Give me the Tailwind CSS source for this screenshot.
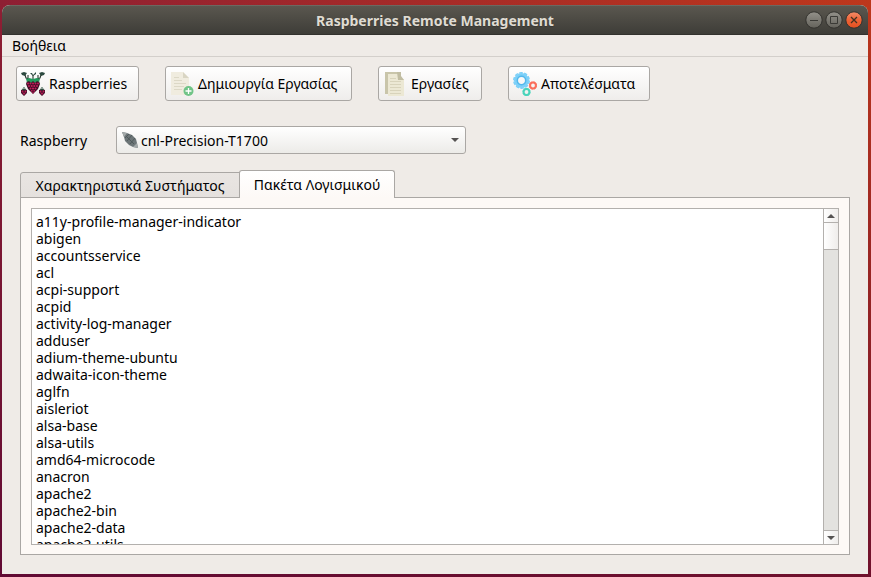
<!DOCTYPE html>
<html lang="el">
<head>
<meta charset="utf-8">
<meta name="viewport" content="width=device-width, initial-scale=1">
<title>Raspberries Remote Management</title>
<script src="https://cdn.jsdelivr.net/npm/@tailwindcss/browser@4"></script>
</head>
<body class="relative h-screen overflow-hidden bg-[linear-gradient(to_bottom,transparent,#4d0034b0),linear-gradient(to_right,#8e1f33,#bd371c)] pt-[5px] pr-[3px] pb-[3px] pl-[2px] font-['Noto_Sans','Open_Sans',sans-serif] text-[14px] leading-[17px] text-black">
<main class="flex h-full flex-col overflow-hidden rounded-t-lg bg-[#efebe7]">
  <header class="relative flex h-[30px] shrink-0 items-center justify-center border-t border-b border-t-[#6b6961] border-b-[#33322e] bg-linear-to-b from-[#5a574f] to-[#3e3d38] text-[#dfdbd2]">
    <h1 class="font-bold text-[14px] text-shadow-xs">Raspberries Remote Management</h1>
    <div class="absolute right-[5px] flex gap-[2px]">
      <button aria-label="Minimize" class="size-[18px]"><svg viewBox="0 0 18 18" class="size-[18px]"><defs><linearGradient id="g" x2="0" y2="1"><stop stop-color="#93918a"/><stop offset="1" stop-color="#64625b"/></linearGradient><linearGradient id="o" x2="0" y2="1"><stop stop-color="#f58e6a"/><stop offset=".5" stop-color="#ee6336"/><stop offset="1" stop-color="#e4501f"/></linearGradient></defs><circle cx="9" cy="9" r="8.2" fill="url(#g)" stroke="#33322e"/><path d="M5 9.5h8" stroke="#3b3a36"/></svg></button>
      <button aria-label="Maximize" class="size-[18px]"><svg viewBox="0 0 18 18" class="size-[18px]"><circle cx="9" cy="9" r="8.2" fill="url(#g)" stroke="#33322e"/><path d="M5.5 5.5h7v7h-7z" fill="none" stroke="#3b3a36"/></svg></button>
      <button aria-label="Close" class="size-[18px]"><svg viewBox="0 0 18 18" class="size-[18px]"><circle cx="9" cy="9" r="8.2" fill="url(#o)" stroke="#33322e"/><path d="M6 6l6 6M12 6l-6 6" stroke="#43301f" stroke-width="1.3"/></svg></button>
    </div>
  </header>
  <nav class="flex h-[22px] shrink-0 items-center border-b border-[#d3cfcb] px-[10px]">
    <button>Βοήθεια</button>
  </nav>

  <div class="flex shrink-0 gap-[26px] px-[14px] pt-[9px]">
    <button class="flex h-[35px] w-[123px] items-center gap-1 rounded-[3px] border border-[#aaa7a4] bg-linear-to-b from-white to-[#efedeb] pl-1 whitespace-nowrap">
      <svg viewBox="0 0 24 24" class="size-6 shrink-0">
        <path d="M0 1l3-1 3 1-2 3-3-1zM24 1l-3-1-3 1 2 3 3-1zM9 1l2 0 1 2 3-3 0 2-3 2z" fill="#2c4a40"/>
        <path d="M4 3l1 3 3 1M20 3l-1 3-3 1M12 3v4M7 3v3M17 3v3" fill="none" stroke="#27392f" stroke-width="1.100"/>
        <path d="M6 9l3-1 3 1 3-1 3 1 1 3-2 5-3 3-2 2-2-2-3-3-2-5z" fill="#3f0d25"/>
        <path d="M5 7l3-1 4 1 4-1 3 1-1 3-2-1-2 2-2-2-2 2-2-2-2 1z" fill="#24985c"/>
        <g fill="#c11c5a">
          <circle cx="7" cy="11.500" r="1"/><circle cx="9.500" cy="11.500" r="1"/><circle cx="12" cy="11.500" r="1"/><circle cx="14.500" cy="11.500" r="1"/><circle cx="17" cy="11.500" r="1"/>
          <circle cx="8" cy="14" r="1"/><circle cx="10.700" cy="14" r="1.100"/><circle cx="13.300" cy="14" r="1.100"/><circle cx="16" cy="14" r="1"/>
          <circle cx="9.500" cy="16.500" r="1"/><circle cx="12" cy="16.500" r="1.100"/><circle cx="14.500" cy="16.500" r="1"/>
          <circle cx="10.800" cy="18.800" r=".9"/><circle cx="13.200" cy="18.800" r=".9"/><circle cx="12" cy="20.700" r=".8"/>
        </g>
        <path d="M0 18l3-1 3 1v3l-3 3-3-3zM18 18l3-1 3 1v3l-3 3-3-3z" fill="#48102b"/>
        <g fill="#b91d54"><circle cx="1.500" cy="19.500" r=".9"/><circle cx="4.500" cy="19.500" r=".9"/><circle cx="3" cy="21.500" r="1"/><circle cx="19.500" cy="19.500" r=".9"/><circle cx="22.500" cy="19.500" r=".9"/><circle cx="21" cy="21.500" r="1"/></g>
        <path d="M1 17l2 1 2-1M3 15v3M19 17l2 1 2-1M21 15v3" fill="none" stroke="#294f3e"/>
      </svg>
      Raspberries
    </button>
    <button class="flex h-[35px] w-[187px] items-center gap-1 rounded-[3px] border border-[#aaa7a4] bg-linear-to-b from-white to-[#efedeb] pl-1 whitespace-nowrap">
      <svg viewBox="0 0 24 24" class="size-6 shrink-0">
        <path d="M1 0h12l6 6v17H1z" fill="#f0ecdf"/><path d="M13 0l6 6h-6z" fill="#d9d5c3"/>
        <path d="M4 5.500h5M4 8.500h8M4 11.500h12M4 14.500h10M4 17.500h8" stroke="#dcd8c6"/>
        <circle cx="18.500" cy="19" r="5" fill="#70c487"/><path d="M18.500 16v6M15.500 19h6" stroke="#fff" stroke-width="1.300"/>
      </svg>
      Δημιουργία Εργασίας
    </button>
    <button class="flex h-[35px] w-[104px] items-center gap-1 rounded-[3px] border border-[#aaa7a4] bg-linear-to-b from-white to-[#efedeb] pl-1 whitespace-nowrap">
      <svg viewBox="0 0 24 24" class="size-6 shrink-0">
        <path d="M2 0h16v22H2z" fill="#c9c5aa"/><path d="M5 2h10v5h6v17H5z" fill="#ece8d4"/><path d="M14 0h4v4l3 4h-6z" fill="#c1bda2"/>
        <path d="M7 6.500h6M7 9.500h11M7 12.500h11M7 15.500h11M7 18.500h11M7 21.500h11" stroke="#d8d3bb"/>
      </svg>
      Εργασίες
    </button>
    <button class="flex h-[35px] w-[142px] items-center gap-1 rounded-[3px] border border-[#aaa7a4] bg-linear-to-b from-white to-[#efedeb] pl-1 whitespace-nowrap">
      <svg viewBox="0 0 24 24" class="size-6 shrink-0" fill="none">
        <circle cx="8.500" cy="8.500" r="7.700" stroke="#7dd0f8" stroke-width="1.600" stroke-dasharray="3.400 1.438"/>
        <circle cx="8.500" cy="8.500" r="5.600" stroke="#7dd0f8" stroke-width="3.800"/>
        <circle cx="8.500" cy="8.500" r="4.200" stroke="#53b8ec" stroke-width="1.500"/>
        <circle cx="20" cy="13.500" r="2.900" stroke="#fa6f5d" stroke-width="2"/><circle cx="20" cy="13.500" r="3.600" stroke="#fa6f5d" stroke-dasharray="1.700 1.127"/>
        <circle cx="13.500" cy="20" r="2.900" stroke="#4bd4bb" stroke-width="2"/><circle cx="13.500" cy="20" r="3.600" stroke="#4bd4bb" stroke-dasharray="1.700 1.127"/>
      </svg>
      Αποτελέσματα
    </button>
  </div>

  <div class="mt-[25px] flex shrink-0 items-center px-[18px]">
    <label for="host" class="w-24">Raspberry</label>
    <div class="relative w-[350px]">
      <select id="host" class="block h-[28px] w-full appearance-none rounded-[3px] border border-[#aaa7a4] bg-linear-to-b from-white to-[#ecebe8] pl-6">
        <option>cnl-Precision-T1700</option>
      </select>
      <svg viewBox="0 0 16 16" class="pointer-events-none absolute top-[6px] left-[6px] size-4">
        <path d="M0 0l5 1 5 2 4 4 1 4 1 5-5-1-4-2-4-4-1-4z" fill="#6d7678"/><path d="M0 0l5 1-3 4zM16 16l-5-1 4-4z" fill="#a4aaaa"/><path d="M3 6l4-4M5 9l5-6M8 12l5-6M4 4l8 8" stroke="#505b5c"/>
      </svg>
      <svg viewBox="0 0 8 4" class="pointer-events-none absolute top-[12px] right-[7px] h-1 w-2"><path d="M0 0h8L4 4z" fill="#555352"/></svg>
    </div>
  </div>

  <section class="mx-[18px] mt-4 mb-[19px] flex min-h-0 flex-1 flex-col">
    <div role="tablist" class="relative -mb-px flex shrink-0 items-end">
      <button role="tab" aria-selected="false" class="h-[26px] w-[220px] rounded-tl-[3px] border border-[#aaa7a4] bg-linear-to-b from-[#e9e5e2] to-[#e5e1de] whitespace-nowrap">Χαρακτηριστικά Συστήματος</button>
      <button role="tab" aria-selected="true" class="-ml-px h-[28px] w-[156px] rounded-t-[3px] border border-b-0 border-[#aaa7a4] bg-linear-to-b from-white to-[#fdf9f6] whitespace-nowrap">Πακέτα Λογισμικού</button>
    </div>
    <div role="tabpanel" class="flex min-h-0 flex-1 border border-[#aaa7a4] bg-[#fdf9f6] px-[10px] pt-[10px] pb-[9px]">
      <div class="flex min-w-0 flex-1 border border-[#b3b0ad] bg-white">
        <ul class="min-w-0 flex-1 overflow-hidden px-1 pt-[4px]">
          <li>a11y-profile-manager-indicator</li>
          <li>abigen</li>
          <li>accountsservice</li>
          <li>acl</li>
          <li>acpi-support</li>
          <li>acpid</li>
          <li>activity-log-manager</li>
          <li>adduser</li>
          <li>adium-theme-ubuntu</li>
          <li>adwaita-icon-theme</li>
          <li>aglfn</li>
          <li>aisleriot</li>
          <li>alsa-base</li>
          <li>alsa-utils</li>
          <li>amd64-microcode</li>
          <li>anacron</li>
          <li>apache2</li>
          <li>apache2-bin</li>
          <li>apache2-data</li>
          <li>apache2-utils</li>
        </ul>
        <div class="flex w-[15px] shrink-0 flex-col border-l border-[#b3b0ad] bg-[#e3e2df]">
          <button aria-label="Scroll up" class="flex h-[14px] shrink-0 items-center justify-center border-b border-[#b3b0ad] bg-linear-to-r from-white to-[#efedeb]"><svg viewBox="0 0 8 4" class="h-1 w-2"><path d="M0 4h8L4 0z" fill="#555352"/></svg></button>
          <div class="h-[27px] shrink-0 border-b border-[#b3b0ad] bg-linear-to-r from-white to-[#efedeb]"></div>
          <button aria-label="Scroll down" class="mt-auto flex h-[14px] shrink-0 items-center justify-center border-t border-[#b3b0ad] bg-linear-to-r from-white to-[#efedeb]"><svg viewBox="0 0 8 4" class="h-1 w-2"><path d="M0 0h8L4 4z" fill="#555352"/></svg></button>
        </div>
      </div>
    </div>
  </section>
</main>
</body>
</html>
